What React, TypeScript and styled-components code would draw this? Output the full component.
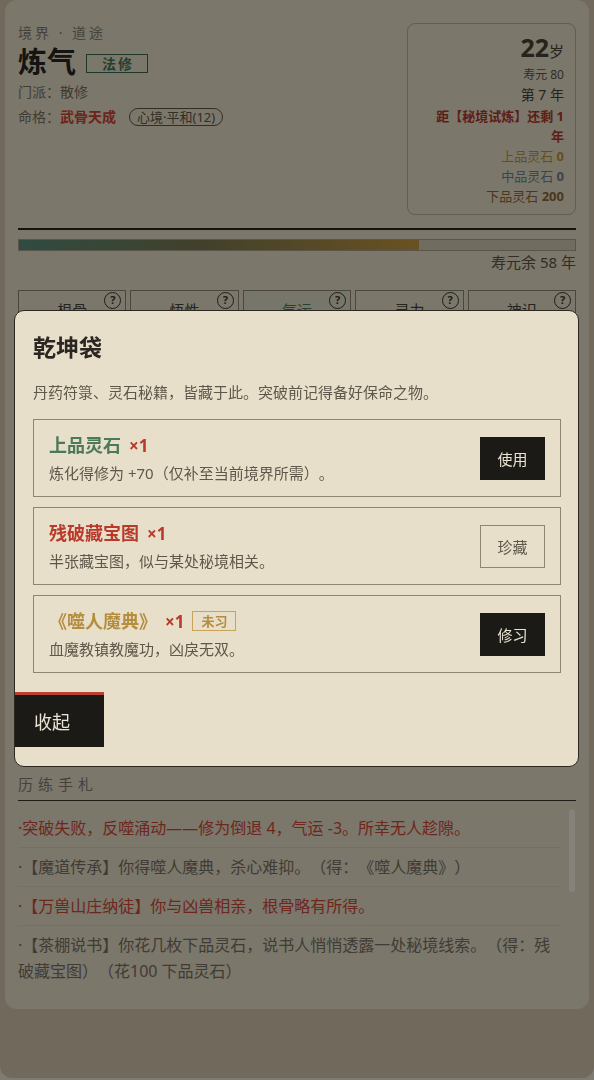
import styled, { createGlobalStyle } from 'styled-components';

const GlobalStyle = createGlobalStyle`
  * { box-sizing: border-box; }
  html, body {
    margin: 0;
    padding: 0;
    background: #efe8da;
  }
  body {
    font-family: "Noto Sans", "Noto Sans CJK SC", sans-serif;
    color: #2b2622;
    text-spacing-trim: space-all;
  }
`;

const stats = ['根骨', '悟性', '气运', '灵力', '神识'];

const actions = ['闭关修炼', '外出游历', '炼丹', '坊市', '拜访宗门', '查看功法', '突破', '休整', '传闻', '洞府', '人情', '天机'];

const logs = [
  { text: '·突破失败，反噬涌动——修为倒退 4，气运 -3。所幸无人趁隙。', tone: 'red' },
  { text: '·【魔道传承】你得噬人魔典，杀心难抑。（得：《噬人魔典》）', tone: 'plain' },
  { text: '·【万兽山庄纳徒】你与凶兽相亲，根骨略有所得。', tone: 'red' },
  { text: '·【茶棚说书】你花几枚下品灵石，说书人悄悄透露一处秘境线索。（得：残破藏宝图）（花100 下品灵石）', tone: 'plain' },
  { text: '·你在山间吐纳一年，修为 +6。', tone: 'plain' },
  { text: '·【坊市】你以灵石换得一枚上品灵石。', tone: 'plain' },
  { text: '·你离开故里，踏上修行之路。', tone: 'plain' },
  { text: '·年方十五，你初感灵气，踏入炼气。', tone: 'plain' },
] as const;

export default function App() {
  return (
    <>
      <GlobalStyle />
      <Shell>
        <Card>
          <Header>
            <Identity>
              <Eyebrow>境界 · 道途</Eyebrow>
              <RealmRow>
                <Realm>炼气</Realm>
                <PathTag>法修</PathTag>
              </RealmRow>
              <InfoLine>门派：散修</InfoLine>
              <InfoLine>
                命格：<Fate>武骨天成</Fate>
                <MindPill>心境·平和(12)</MindPill>
              </InfoLine>
            </Identity>
            <AgeBox>
              <Age>
                <AgeNum>22</AgeNum>岁
              </Age>
              <Lifespan>寿元 80</Lifespan>
              <YearLine>第 7 年</YearLine>
              <Countdown>距【秘境试炼】还剩 1 年</Countdown>
              <Stone $tone="high">
                上品灵石 <b>0</b>
              </Stone>
              <Stone $tone="mid">
                中品灵石 <b>0</b>
              </Stone>
              <Stone $tone="low">
                下品灵石 <b>200</b>
              </Stone>
            </AgeBox>
          </Header>

          <Rule />
          <LifeBar>
            <LifeFill style={{ width: '72%' }} />
          </LifeBar>
          <LifeNote>寿元余 58 年</LifeNote>

          <StatsRow>
            {stats.map((s) => (
              <StatBox key={s} $active={s === '气运'}>
                <StatLabel>{s}</StatLabel>
                <StatValue>{s === '气运' ? 5 : 6}</StatValue>
                <Hint>?</Hint>
              </StatBox>
            ))}
          </StatsRow>

          <SectionLabel>修为</SectionLabel>
          <CultBar>
            <CultFill style={{ width: '38%' }} />
          </CultBar>
          <ActionGrid>
            {actions.map((a) => (
              <ActionButton key={a}>{a}</ActionButton>
            ))}
          </ActionGrid>
          <Notice>天道无常，修行路远。每一年的抉择，皆会落入历练手札之中。</Notice>

          <LogTitle>历练手札</LogTitle>
          <LogWrap>
            <LogList>
              {logs.map((l, i) => (
                <LogEntry key={i} $tone={l.tone}>
                  {l.text}
                </LogEntry>
              ))}
            </LogList>
            <ScrollThumb />
          </LogWrap>
        </Card>
      </Shell>

      <Overlay>
        <Modal>
          <ModalBody>
            <ModalTitle>乾坤袋</ModalTitle>
            <ModalDesc>丹药符箓、灵石秘籍，皆藏于此。突破前记得备好保命之物。</ModalDesc>
            <ItemList>
              <Item>
                <ItemText>
                  <ItemHead>
                    <ItemName $tone="green">上品灵石</ItemName>
                    <Count>×1</Count>
                  </ItemHead>
                  <ItemDesc>炼化得修为 +70（仅补至当前境界所需）。</ItemDesc>
                </ItemText>
                <ItemButton $variant="solid">使用</ItemButton>
              </Item>
              <Item>
                <ItemText>
                  <ItemHead>
                    <ItemName $tone="red">残破藏宝图</ItemName>
                    <Count>×1</Count>
                  </ItemHead>
                  <ItemDesc>半张藏宝图，似与某处秘境相关。</ItemDesc>
                </ItemText>
                <ItemButton $variant="outline">珍藏</ItemButton>
              </Item>
              <Item>
                <ItemText>
                  <ItemHead>
                    <ItemName $tone="gold">《噬人魔典》</ItemName>
                    <Count>×1</Count>
                    <StateTag>未习</StateTag>
                  </ItemHead>
                  <ItemDesc>血魔教镇教魔功，凶戾无双。</ItemDesc>
                </ItemText>
                <ItemButton $variant="solid">修习</ItemButton>
              </Item>
            </ItemList>
          </ModalBody>
          <CloseButton>收起</CloseButton>
        </Modal>
      </Overlay>
    </>
  );
}

const Shell = styled.div`
  width: 594px;
  min-height: 1078px;
  padding: 0 5px 68px;
  background: #d6c9ae;
  border-radius: 0 0 12px 12px;
`;

const Card = styled.div`
  background: #e9e0cb;
  border-radius: 12px;
  padding: 23px 13px 24px;
`;

const Header = styled.div`
  display: flex;
  justify-content: space-between;
  align-items: flex-start;
`;

const Identity = styled.div`
  display: flex;
  flex-direction: column;
`;

const Eyebrow = styled.div`
  font-size: 14px;
  line-height: 20px;
  letter-spacing: 3px;
  color: #857e70;
`;

const RealmRow = styled.div`
  display: flex;
  align-items: center;
  gap: 10px;
  margin-top: 2px;
`;

const Realm = styled.div`
  font-size: 29px;
  line-height: 34px;
  font-weight: 700;
  color: #2b2622;
`;

const PathTag = styled.span`
  border: 1px solid #3d6a4c;
  color: #46785a;
  font-size: 14px;
  font-weight: 700;
  letter-spacing: 2px;
  line-height: 17px;
  padding: 0 13px 0 15px;
  margin-top: 2px;
`;

const InfoLine = styled.div`
  display: flex;
  align-items: center;
  font-size: 14px;
  line-height: 24px;
  color: #7a7264;
  margin-top: 1px;
`;

const Fate = styled.span`
  font-size: 14px;
  font-weight: 700;
  color: #cc4634;
`;

const MindPill = styled.span`
  margin-left: 13px;
  border: 1px solid #5e574b;
  border-radius: 10px;
  padding: 0 7px;
  font-size: 13px;
  line-height: 16px;
  color: #5e574b;
`;

const AgeBox = styled.div`
  width: 169px;
  border: 1px solid #b9b09d;
  border-radius: 8px;
  padding: 8px 11px 8px 20px;
  text-align: right;
  display: flex;
  flex-direction: column;
  align-items: flex-end;
`;

const Age = styled.div`
  font-size: 15px;
  line-height: 30px;
  color: #4a4232;
`;

const AgeNum = styled.span`
  font-size: 25px;
  font-weight: 700;
`;

const Lifespan = styled.div`
  font-size: 12px;
  line-height: 18px;
  color: #5e574b;
`;

const YearLine = styled.div`
  font-size: 14px;
  line-height: 22px;
  color: #4a4438;
`;

const Countdown = styled.div`
  font-size: 13px;
  font-weight: 700;
  line-height: 20px;
  color: #b03a2c;
`;

const Stone = styled.div<{ $tone: 'high' | 'mid' | 'low' }>`
  font-size: 13px;
  line-height: 20px;
  color: ${(p) => (p.$tone === 'high' ? '#bf9733' : p.$tone === 'mid' ? '#74818e' : '#8f6a38')};
  b {
    font-weight: 700;
  }
`;

const Rule = styled.div`
  height: 2px;
  background: #2b2620;
  margin-top: 13px;
`;

const LifeBar = styled.div`
  height: 12px;
  margin-top: 9px;
  border: 1px solid #a8a08e;
  background: #d6ccb6;
  overflow: hidden;
`;

const LifeFill = styled.div`
  height: 100%;
  background: linear-gradient(90deg, #5a8f7c, #7c7a52 45%, #c89a40);
`;

const LifeNote = styled.div`
  text-align: right;
  font-size: 15px;
  line-height: 20px;
  margin-top: 1px;
  color: #5e574b;
`;

const StatsRow = styled.div`
  display: grid;
  grid-template-columns: repeat(5, 1fr);
  gap: 4px;
  margin-top: 18px;
`;

const StatBox = styled.div<{ $active?: boolean }>`
  position: relative;
  height: 62px;
  border: 1px solid #8e8674;
  background: ${(p) => (p.$active ? '#dfe0c8' : 'transparent')};
  text-align: center;
  padding-top: 8px;
  color: ${(p) => (p.$active ? '#4f7a5c' : '#4a4438')};
`;

const StatLabel = styled.div`
  font-size: 15px;
  line-height: 22px;
`;

const StatValue = styled.div`
  font-size: 18px;
  font-weight: 700;
  line-height: 24px;
`;

const Hint = styled.span`
  position: absolute;
  top: 1px;
  right: 4px;
  width: 17px;
  height: 17px;
  border: 1.5px solid #3c372f;
  border-radius: 50%;
  font-size: 11px;
  font-weight: 700;
  line-height: 14px;
  text-align: center;
  color: #3c372f;
`;

const SectionLabel = styled.div`
  margin-top: 16px;
  font-size: 14px;
  line-height: 22px;
  color: #5e574b;
`;

const CultBar = styled.div`
  height: 12px;
  margin-top: 8px;
  border: 1px solid #a8a08e;
`;

const CultFill = styled.div`
  height: 100%;
  background: #5a8f7c;
`;

const ActionGrid = styled.div`
  display: grid;
  grid-template-columns: repeat(3, 1fr);
  gap: 10px;
  margin-top: 16px;
`;

const ActionButton = styled.button`
  height: 46px;
  border: 1px solid #8e8674;
  background: transparent;
  font-family: inherit;
  font-size: 15px;
  color: #2b2622;
`;

const Notice = styled.div`
  margin-top: 16px;
  padding: 12px;
  border: 1px dashed #a8a08e;
  font-size: 14px;
  line-height: 24px;
  color: #5e574b;
  height: 96px;
`;

const LogTitle = styled.div`
  margin-top: 21px;
  font-size: 15px;
  line-height: 22px;
  letter-spacing: 5px;
  color: #857e70;
  padding-bottom: 5px;
  border-bottom: 1px solid #3c372f;
`;

const LogWrap = styled.div`
  position: relative;
  margin-top: 8px;
`;

const LogList = styled.div`
  height: 176px;
  overflow-y: auto;
  padding-right: 16px;
  scrollbar-width: none;
  &::-webkit-scrollbar {
    display: none;
  }
`;

const ScrollThumb = styled.div`
  position: absolute;
  top: 0;
  right: 1px;
  width: 6px;
  height: 83px;
  border-radius: 3px;
  background: #fbf6ea;
`;

const LogEntry = styled.div<{ $tone: 'red' | 'plain' }>`
  padding: 6px 0;
  border-bottom: 1px solid #ddd3bd;
  font-size: 16px;
  line-height: 26px;
  color: ${(p) => (p.$tone === 'red' ? '#d04a37' : '#7a7264')};
`;

const Overlay = styled.div`
  position: fixed;
  inset: 0;
  background: rgba(0, 0, 0, 0.47);
  padding: 310px 15px 0 14px;
`;

const Modal = styled.div`
  background: #e8dfca;
  border: 1px solid #2c2822;
  border-radius: 10px;
  padding-bottom: 19px;
  overflow: hidden;
`;

const ModalBody = styled.div`
  padding: 22px 17px 0 18px;
`;

const ModalTitle = styled.div`
  font-size: 23px;
  font-weight: 700;
  line-height: 28px;
  color: #2b2622;
`;

const ModalDesc = styled.div`
  margin-top: 20px;
  font-size: 15px;
  line-height: 22px;
  color: #5e574b;
`;

const ItemList = styled.div`
  display: flex;
  flex-direction: column;
  gap: 10px;
  margin-top: 16px;
`;

const Item = styled.div`
  display: flex;
  align-items: center;
  justify-content: space-between;
  border: 1px solid #8e8674;
  padding: 13px 15px 12px;
`;

const ItemText = styled.div`
  display: flex;
  flex-direction: column;
  gap: 5px;
`;

const ItemHead = styled.div`
  display: flex;
  align-items: center;
  gap: 8px;
  height: 24px;
`;

const ItemName = styled.span<{ $tone: 'green' | 'red' | 'gold' }>`
  font-size: 18px;
  font-weight: 700;
  line-height: 24px;
  color: ${(p) => (p.$tone === 'green' ? '#4a7a5a' : p.$tone === 'red' ? '#b83a2a' : '#b58d3f')};
`;

const Count = styled.span`
  font-family: "Noto Sans", "Liberation Sans", sans-serif;
  font-size: 17px;
  font-weight: 700;
  color: #b83a2a;
`;

const StateTag = styled.span`
  border: 1px solid #c9a35a;
  color: #b58d3f;
  font-size: 13px;
  font-weight: 700;
  line-height: 18px;
  padding: 0 8px;
`;

const ItemDesc = styled.div`
  font-size: 15px;
  line-height: 22px;
  color: #5e574b;
`;

const ItemButton = styled.button<{ $variant: 'solid' | 'outline' }>`
  width: 65px;
  height: 43px;
  font-family: inherit;
  font-size: 15px;
  border: 1px solid ${(p) => (p.$variant === 'solid' ? '#1c1a17' : '#8e8674')};
  background: ${(p) => (p.$variant === 'solid' ? '#1c1a17' : 'transparent')};
  color: ${(p) => (p.$variant === 'solid' ? '#ece4d2' : '#5e574b')};
`;

const CloseButton = styled.button`
  display: block;
  margin-top: 19px;
  width: 89px;
  height: 55px;
  border: none;
  border-top: 3px solid #b8402e;
  background: #1c1a17;
  color: #ece4d2;
  font-family: inherit;
  font-size: 18px;
  text-align: left;
  padding: 0 0 0 19px;
`;
